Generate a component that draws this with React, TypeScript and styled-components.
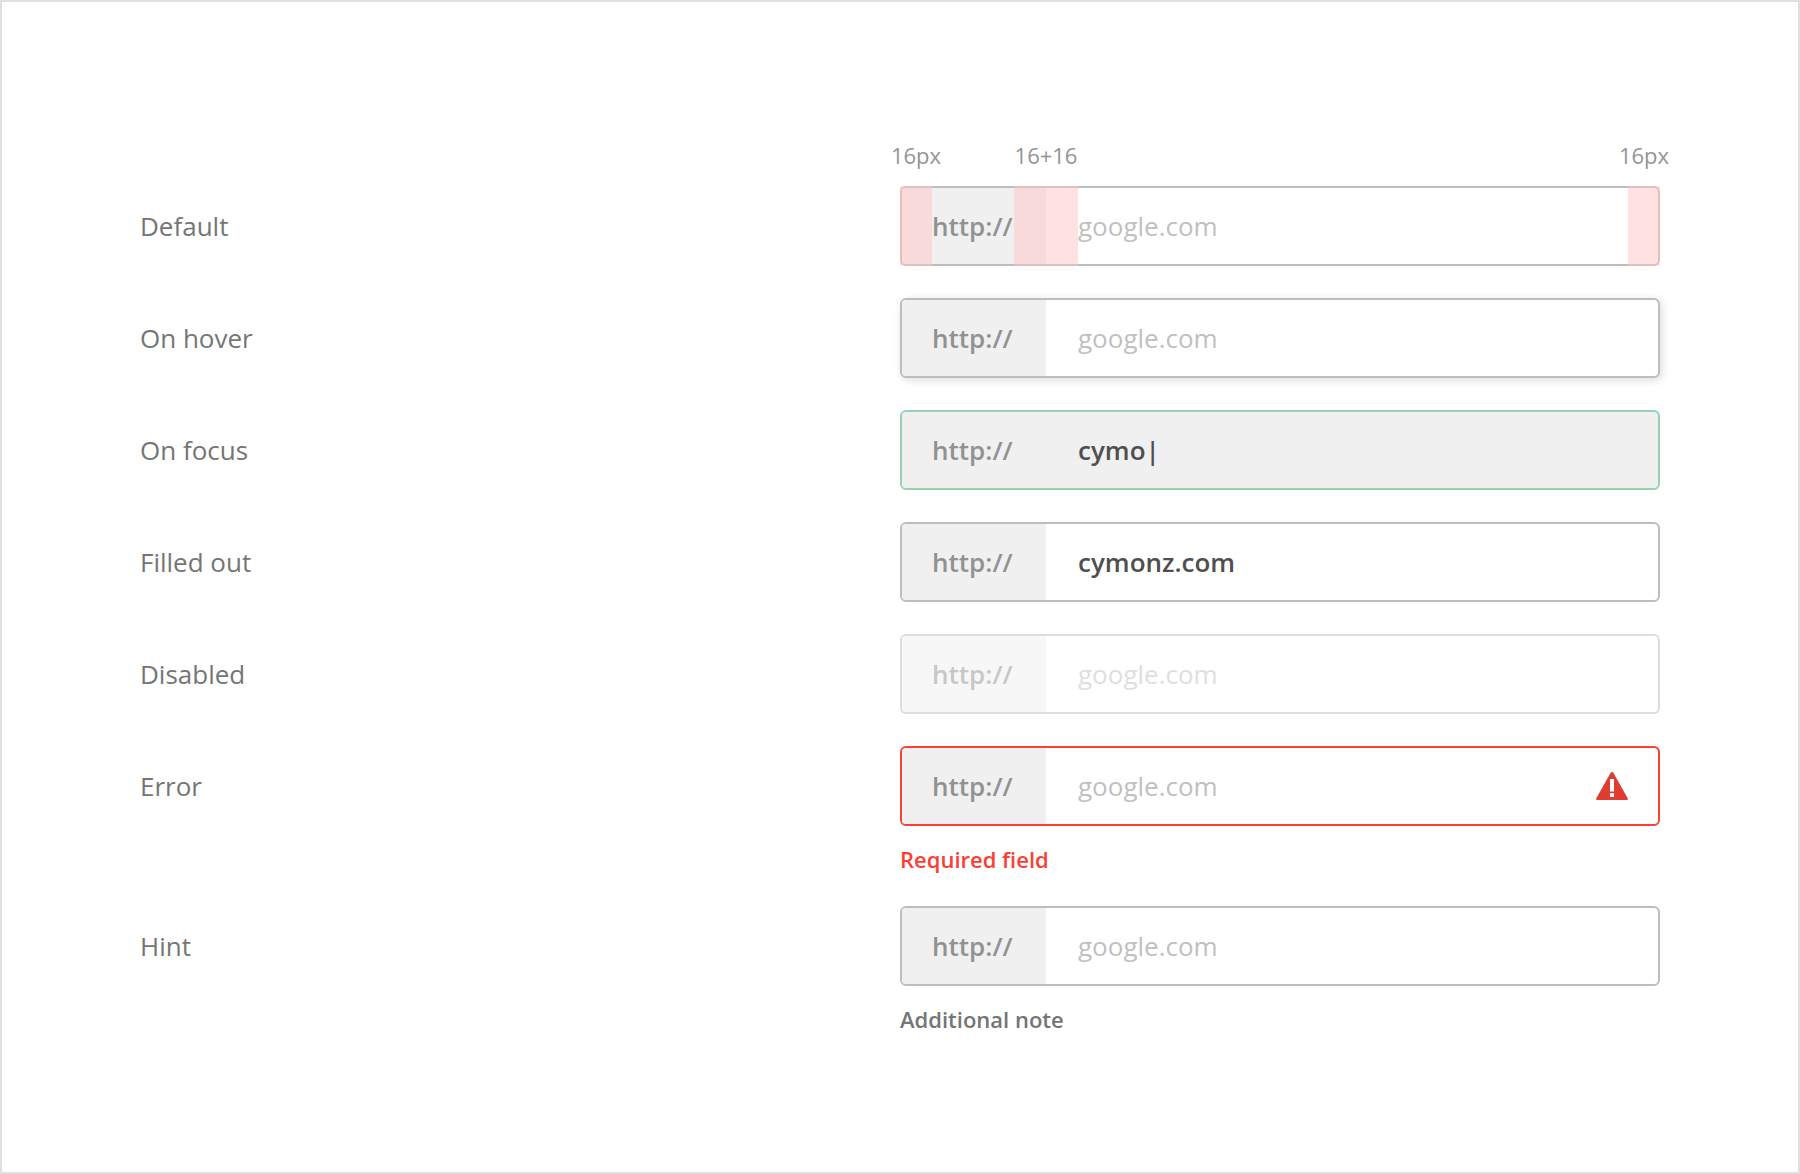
import React from "react";
import styled, { createGlobalStyle, css } from "styled-components";

const GlobalStyle = createGlobalStyle`
  *, *::before, *::after { box-sizing: border-box; }
  body {
    margin: 0;
    background: #fff;
    font-family: "Open Sans", "Noto Sans", sans-serif;
    font-size: 26px;
    line-height: 36px;
    color: #757575;
  }
`;

type State = "default" | "hover" | "focus" | "filled" | "disabled" | "error" | "hint";

const borderColors: Record<State, string> = {
  default: "#bdbdbd",
  hover: "#bdbdbd",
  focus: "#95d2af",
  filled: "#bdbdbd",
  disabled: "#bdbdbd",
  error: "#fa4035",
  hint: "#bdbdbd",
};

const Page = styled.main`
  min-height: 100vh;
  padding: 136px 138px 0;
  border: 2px solid #e0e0e0;
`;

const Rows = styled.div`
  display: flex;
  flex-direction: column;
  gap: 32px;
`;

const Columns = styled.div`
  display: grid;
  grid-template-columns: 1fr 1fr;
`;

const RowLabel = styled.label`
  height: 80px;
  display: flex;
  align-items: center;
`;

const spacingColumns = css`
  display: grid;
  grid-template-columns: 32px 82px 64px 1fr 32px;
`;

const Measures = styled.div`
  ${spacingColumns}
  grid-column: 2;
  height: 48px;
  font-size: 22px;
  line-height: 34px;
  color: #949494;
`;

const Measure = styled.span<{ $column: number }>`
  grid-column: ${(p) => p.$column};
  justify-self: center;
  white-space: nowrap;
`;

const Field = styled.div<{ $state: State }>`
  position: relative;
  display: flex;
  height: 80px;
  border: 2px solid ${(p) => borderColors[p.$state]};
  border-radius: 6px;
  background: ${(p) => (p.$state === "focus" ? "#f0f0f0" : "#fff")};
  opacity: ${(p) => (p.$state === "disabled" ? 0.5 : 1)};
  box-shadow: ${(p) => (p.$state === "hover" ? "2px 2px 8px rgba(0, 0, 0, 0.14)" : "none")};
`;

const Prefix = styled.span`
  flex: none;
  width: 144px;
  padding-left: 30px;
  display: flex;
  align-items: center;
  border-radius: 4px 0 0 4px;
  background: #f0f0f0;
  color: #919191;
  font-weight: 600;
`;

const TextInput = styled.input`
  flex: 1;
  min-width: 0;
  padding: 0 32px;
  border: 0;
  outline: 0;
  background: transparent;
  color: #4f4f4f;
  font: inherit;
  font-weight: 600;

  &::placeholder {
    color: #c0c0c0;
    font-weight: 400;
    opacity: 1;
  }
`;

const AlertIcon = styled.svg`
  flex: none;
  align-self: center;
  width: 32px;
  height: 28px;
  margin-right: 30px;
`;

const SpacingOverlay = styled.div`
  ${spacingColumns}
  position: absolute;
  inset: -2px;
  pointer-events: none;
`;

const Band = styled.span<{ $column: number }>`
  grid-column: ${(p) => p.$column};
  background: rgba(255, 196, 198, 0.5);
`;

const Note = styled.p<{ $error?: boolean }>`
  margin: 0;
  padding-top: 18px;
  font-size: 22px;
  line-height: 30px;
  font-weight: 600;
  color: ${(p) => (p.$error ? "#fa4035" : "#757575")};
`;

type UrlRowProps = {
  label: string;
  state: State;
  value?: string;
  note?: string;
  spacing?: boolean;
};

function UrlRow({ label, state, value, note, spacing }: UrlRowProps) {
  const id = `url-${state}`;
  return (
    <Columns>
      <RowLabel htmlFor={id}>{label}</RowLabel>
      <div>
        <Field $state={state}>
          <Prefix>http://</Prefix>
          <TextInput
            id={id}
            type="text"
            placeholder="google.com"
            defaultValue={value}
            disabled={state === "disabled"}
            aria-invalid={state === "error"}
            aria-describedby={note ? `${id}-note` : undefined}
          />
          {state === "error" && (
            <AlertIcon viewBox="0 0 32 28" aria-hidden="true">
              <path
                d="M14.5 0.9a1.8 1.8 0 0 1 3 0L31.7 26.2a1.2 1.2 0 0 1-1 1.8H1.3a1.2 1.2 0 0 1-1-1.8Z"
                fill="#df3d32"
              />
              <path d="M14 7h4v12.500h-4ZM14 21.200h4v3.800h-4Z" fill="#fff" />
            </AlertIcon>
          )}
          {spacing && (
            <SpacingOverlay>
              <Band $column={1} />
              <Band $column={3} />
              <Band $column={5} />
            </SpacingOverlay>
          )}
        </Field>
        {note && (
          <Note id={`${id}-note`} $error={state === "error"}>
            {note}
          </Note>
        )}
      </div>
    </Columns>
  );
}

export default function App() {
  return (
    <>
      <GlobalStyle />
      <Page>
        <Columns>
          <Measures>
            <Measure $column={1}>16px</Measure>
            <Measure $column={3}>16+16</Measure>
            <Measure $column={5}>16px</Measure>
          </Measures>
        </Columns>
        <Rows>
          <UrlRow label="Default" state="default" spacing />
          <UrlRow label="On hover" state="hover" />
          <UrlRow label="On focus" state="focus" value="cymo|" />
          <UrlRow label="Filled out" state="filled" value="cymonz.com" />
          <UrlRow label="Disabled" state="disabled" />
          <UrlRow label="Error" state="error" note="Required field" />
          <UrlRow label="Hint" state="hint" note="Additional note" />
        </Rows>
      </Page>
    </>
  );
}
